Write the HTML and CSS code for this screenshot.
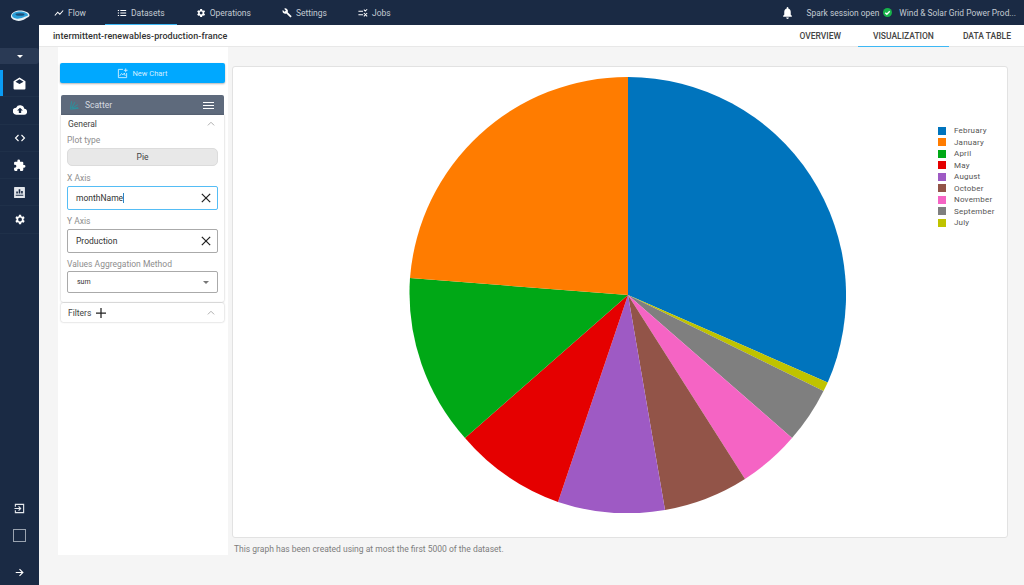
FILE: index.html
```html
<!DOCTYPE html>
<html lang="en">
<head>
    <meta charset="UTF-8">
    <title>Datasets - Visualization</title>
    <link rel="stylesheet" href="styles.css">
</head>
<body>
    <div class="sidebar">
        <div class="logo">
            <svg width="20" height="12" viewBox="0 0 20 12">
                <path fill="#e8f2f7" d="M1 5.500C2 2 6 .5 10 .5s9 1.500 9.500 4.500c.3 2-2.500 2.500-4.500 4-2 1.500-6 2.500-9 1.500C3 9.500.5 8 1 5.500z"/>
                <path fill="#2b9fd8" d="M2 5C3 2.500 6.500 1.500 10 1.500S17.500 3 18 5c.2 1-3 1.500-5 2.500-2 1-5 1.500-7 1C3.500 8 1.500 6.500 2 5z"/>
                <ellipse cx="10" cy="4.500" rx="4.500" ry="1.300" fill="#1d4f78"/>
            </svg>
        </div>
        <div class="side-toggle"><span class="caret"></span></div>
        <a class="side-item active" href="#">
            <svg width="13" height="13" viewBox="0 0 24 24"><path fill="#fff" d="M12 1 1 8v13a2 2 0 0 0 2 2h18a2 2 0 0 0 2-2V8zm0 3 7.500 4.700L12 13 4.500 8.700z"/></svg>
        </a>
        <a class="side-item" href="#">
            <svg width="14" height="14" viewBox="0 0 24 24"><path fill="#fff" d="M19.400 10A7.500 7.500 0 0 0 5.300 8 6 6 0 0 0 6 20h13a5 5 0 0 0 .4-10zM14 13v4h-4v-4H7l5-5 5 5z"/></svg>
        </a>
        <a class="side-item" href="#">
            <svg width="12" height="12" viewBox="0 0 24 24"><path fill="none" stroke="#fff" stroke-width="2.200" d="M9 6l-6 6 6 6M15 6l6 6-6 6"/></svg>
        </a>
        <a class="side-item" href="#">
            <svg width="13" height="13" viewBox="0 0 24 24"><path fill="#fff" d="M20.500 11H19V7a2 2 0 0 0-2-2h-4V3.500a2.500 2.500 0 0 0-5 0V5H4a2 2 0 0 0-2 2v3.800h1.500a2.700 2.700 0 0 1 0 5.400H2V20a2 2 0 0 0 2 2h3.800v-1.500a2.700 2.700 0 0 1 5.400 0V22H17a2 2 0 0 0 2-2v-4h1.500a2.500 2.500 0 0 0 0-5z"/></svg>
        </a>
        <a class="side-item" href="#">
            <svg width="13" height="13" viewBox="0 0 24 24"><path fill="#e4e7ec" fill-rule="evenodd" d="M3 2h18a1 1 0 0 1 1 1v18a1 1 0 0 1-1 1H3a1 1 0 0 1-1-1V3a1 1 0 0 1 1-1zm2 16h14v-2H5zm1-4h3v-4H6zm4.500 0h3V6h-3zm4.500 0h3V9h-3z"/></svg>
        </a>
        <a class="side-item" href="#">
            <svg width="13" height="13" viewBox="0 0 24 24"><path fill="#fff" d="M19.400 13a7.600 7.600 0 0 0 0-2l2.100-1.600-2-3.500-2.500 1a7.600 7.600 0 0 0-1.700-1L15 3.300h-4l-.4 2.600a7.600 7.600 0 0 0-1.700 1l-2.500-1-2 3.500L6.500 11a7.600 7.600 0 0 0 0 2l-2.100 1.600 2 3.500 2.500-1a7.600 7.600 0 0 0 1.700 1l.4 2.600h4l.4-2.600a7.600 7.600 0 0 0 1.700-1l2.500 1 2-3.500zM13 15.500a3.500 3.500 0 1 1 0-7 3.500 3.500 0 0 1 0 7z"/></svg>
        </a>
        <div class="side-bottom">
            <a class="side-icon" href="#">
                <svg width="11" height="11" viewBox="0 0 24 24"><path fill="none" stroke="#e4e7ec" stroke-width="2.500" d="M3 8V3h18v18H3v-5M1 12h13M10 7.500l4.500 4.500-4.500 4.500"/></svg>
            </a>
            <div class="side-square"></div>
            <a class="side-arrow" href="#">
                <svg width="9" height="9" viewBox="0 0 24 24"><path fill="none" stroke="#fff" stroke-width="3" d="M2 12h19M12 3l9 9-9 9"/></svg>
            </a>
        </div>
    </div>

    <div class="main">
        <div class="topbar">
            <div class="nav-links">
                <a href="#">
                    <svg width="10" height="10" viewBox="0 0 24 24"><path fill="none" stroke="#fff" stroke-width="2.500" d="M2 18l7-8 5 5 8-9"/></svg>
                    Flow
                </a>
                <a class="current" href="#">
                    <svg width="10" height="10" viewBox="0 0 24 24"><path fill="none" stroke="#fff" stroke-width="2.500" d="M2 6h3M8 6h14M2 12h3M8 12h14M2 18h3M8 18h14"/></svg>
                    Datasets
                </a>
                <a href="#">
                    <svg width="10" height="10" viewBox="0 0 24 24"><path fill="#fff" d="M19.400 13a7.600 7.600 0 0 0 0-2l2.400-1.800-2.300-4-2.800 1.100a7.600 7.600 0 0 0-1.700-1L14.600 2.500h-4.600l-.4 2.800a7.600 7.600 0 0 0-1.700 1L5.100 5.200l-2.300 4L5.200 11a7.600 7.600 0 0 0 0 2l-2.400 1.800 2.300 4 2.800-1.100a7.600 7.600 0 0 0 1.700 1l.4 2.800h4.600l.4-2.800a7.600 7.600 0 0 0 1.700-1l2.800 1.100 2.300-4zM12.300 15.500a3.500 3.500 0 1 1 0-7 3.500 3.500 0 0 1 0 7z"/></svg>
                    Operations
                </a>
                <a href="#">
                    <svg width="10" height="10" viewBox="0 0 24 24"><path fill="#fff" d="M22.700 19 13.600 9.900A6.400 6.400 0 0 0 5.100 1.500L9.400 5.800 6.400 8.800 2 4.600a6.400 6.400 0 0 0 8.500 8.500l9.100 9.100a1 1 0 0 0 1.400 0l1.700-1.700a1 1 0 0 0 0-1.500z"/></svg>
                    Settings
                </a>
                <a href="#">
                    <svg width="10" height="10" viewBox="0 0 24 24"><path fill="none" stroke="#fff" stroke-width="2.500" d="M1 8h11M1 16h11M14 4l3.500 3.500L22 3M14 20l8-8M14 12l8 8"/></svg>
                    Jobs
                </a>
            </div>
            <div class="session">
                <svg class="bell" width="13" height="14" viewBox="0 0 24 24"><path fill="#fff" d="M12 23a2.500 2.500 0 0 0 2.500-2.500h-5A2.500 2.500 0 0 0 12 23zm8-6-2-2v-5c0-3.200-1.700-5.800-4.500-6.500V2.500a1.500 1.500 0 0 0-3 0v1C7.700 4.200 6 6.800 6 10v5l-2 2v2h16z"/></svg>
                <span>Spark session open</span>
                <svg class="ok" width="9" height="9" viewBox="0 0 24 24"><circle cx="12" cy="12" r="12" fill="#17b34a"/><path fill="none" stroke="#fff" stroke-width="3.500" d="M6 12.500l4.200 4.200L18 8.500"/></svg>
                <span class="dataset-name">Wind &amp; Solar Grid Power Prod...</span>
            </div>
        </div>

        <div class="subbar">
            <div class="dataset-title">intermittent-renewables-production-france</div>
            <div class="tabs">
                <a href="#">OVERVIEW</a>
                <a class="current" href="#">VISUALIZATION</a>
                <a href="#">DATA TABLE</a>
            </div>
        </div>

        <div class="content">
            <div class="left-panel">
                <button class="new-chart">
                    <svg width="11" height="11" viewBox="0 0 24 24"><path fill="none" stroke="#cfeeff" stroke-width="2" d="M13 3H3v18h18V11M6 17l4-5 3 3 3-4 2 6M19 1v8M15 5h8"/></svg>
                    New Chart
                </button>
                <div class="chart-card">
                    <div class="card-head">
                        <span class="card-name">
                            <svg width="11" height="10" viewBox="0 0 24 24"><path fill="none" stroke="#2f8f9c" stroke-width="2.500" d="M2 22 5 3M2 22l20-2M5 20 13 5M6 20l14-9M7 21l13-3"/></svg>
                            Scatter
                        </span>
                        <span class="burger"><i></i><i></i><i></i></span>
                    </div>
                    <div class="section general">
                        <div class="section-head">
                            <span>General</span>
                            <svg width="8" height="5" viewBox="0 0 12 8"><path fill="none" stroke="#aaa" stroke-width="1.500" d="M1 7l5-5 5 5"/></svg>
                        </div>
                        <div class="field-label">Plot type</div>
                        <div class="plot-type">Pie</div>
                        <div class="field-label">X Axis</div>
                        <div class="field focused">
                            <span>monthName<span class="cursor"></span></span>
                            <svg width="10" height="10" viewBox="0 0 12 12"><path stroke="#222" stroke-width="1.500" d="M1 1l10 10M11 1 1 11"/></svg>
                        </div>
                        <div class="field-label">Y Axis</div>
                        <div class="field">
                            <span>Production</span>
                            <svg width="10" height="10" viewBox="0 0 12 12"><path stroke="#222" stroke-width="1.500" d="M1 1l10 10M11 1 1 11"/></svg>
                        </div>
                        <div class="field-label">Values Aggregation Method</div>
                        <div class="field select">
                            <span>sum</span>
                            <span class="caret gray"></span>
                        </div>
                    </div>
                    <div class="section filters">
                        <span class="filters-name">Filters
                            <svg width="10" height="10" viewBox="0 0 12 12"><path stroke="#222" stroke-width="1.500" d="M6 0v12M0 6h12"/></svg>
                        </span>
                        <svg width="8" height="5" viewBox="0 0 12 8"><path fill="none" stroke="#aaa" stroke-width="1.500" d="M1 7l5-5 5 5"/></svg>
                    </div>
                </div>
            </div>

            <div class="chart-column">
                <div class="chart-box">
                    <svg class="pie" width="440" height="440" viewBox="406 73 440 440">
                        <path fill="#0074bd" d="M628 295V77A218 218 0 0 1 827.700 382.500Z"/>
                        <path fill="#bfc300" d="M628 295 827.700 382.500A218 218 0 0 1 823.500 391Z"/>
                        <path fill="#7f7f7f" d="M628 295 823.500 391A218 218 0 0 1 792 438Z"/>
                        <path fill="#f564c4" d="M628 295 792 438A218 218 0 0 1 745 479Z"/>
                        <path fill="#925448" d="M628 295 745 479A218 218 0 0 1 665 510Z"/>
                        <path fill="#9e5ac4" d="M628 295 665 510A218 218 0 0 1 558 502Z"/>
                        <path fill="#e50000" d="M628 295 558 502A218 218 0 0 1 465 438Z"/>
                        <path fill="#00a816" d="M628 295 465 438A218 218 0 0 1 410 278Z"/>
                        <path fill="#ff7c00" d="M628 295 410 278A218 218 0 0 1 628 77Z"/>
                    </svg>
                    <ul class="legend">
                        <li><i class="c1"></i>February</li>
                        <li><i class="c2"></i>January</li>
                        <li><i class="c3"></i>April</li>
                        <li><i class="c4"></i>May</li>
                        <li><i class="c5"></i>August</li>
                        <li><i class="c6"></i>October</li>
                        <li><i class="c7"></i>November</li>
                        <li><i class="c8"></i>September</li>
                        <li><i class="c9"></i>July</li>
                    </ul>
                </div>
                <div class="caption">This graph has been created using at most the first 5000 of the dataset.</div>
            </div>
        </div>
    </div>
</body>
</html>
```

FILE: styles.css
```css
html, body {
    height: 100%;
}
body {
    font-family: Roboto, "Liberation Sans", sans-serif;
    background: #f5f5f5;
    color: #333;
    margin: 0;
    display: flex;
    height: 585px;
    overflow: hidden;
}
a {
    text-decoration: none;
    color: inherit;
}

/* left dark rail */
.sidebar {
    width: 39px;
    flex: none;
    background: #1a2a44;
    display: flex;
    flex-direction: column;
}
.logo {
    height: 25px;
    margin-top: 3px;
    display: flex;
    justify-content: center;
    align-items: center;
}
.side-toggle {
    height: 16px;
    margin-top: 20px;
    background: #2a3a55;
    border-radius: 0 3px 3px 0;
    display: flex;
    justify-content: center;
    align-items: center;
}
.caret {
    width: 0;
    height: 0;
    border-left: 3px solid transparent;
    border-right: 3px solid transparent;
    border-top: 3px solid #fff;
}
.caret.gray {
    border-top-color: #777;
}
.side-item {
    height: 27.300px;
    display: flex;
    justify-content: center;
    align-items: center;
    border-bottom: 1px solid #1f3049;
    box-sizing: border-box;
}
.side-item.active {
    margin-top: 6px;
    box-shadow: inset 3px 0 0 #0a9cf5;
}
.side-bottom {
    margin-top: auto;
    display: flex;
    flex-direction: column;
    align-items: center;
    padding-bottom: 8px;
}
.side-icon {
    display: flex;
    margin-bottom: 15px;
}
.side-square {
    width: 11px;
    height: 11px;
    border: 1px solid #9aa3b0;
    margin-bottom: 26px;
}
.side-arrow {
    display: flex;
}

.main {
    flex: 1;
    min-width: 0;
    display: flex;
    flex-direction: column;
}

/* top navigation */
.topbar {
    height: 25px;
    flex: none;
    background: #1a2a44;
    display: flex;
    justify-content: space-between;
    align-items: stretch;
    color: #c4cad3;
    font-size: 8.500px;
}
.nav-links {
    display: flex;
    gap: 7px;
    padding-left: 3px;
}
.nav-links a {
    display: flex;
    align-items: center;
    gap: 4px;
    padding: 0 12px;
}
.nav-links a.current {
    box-shadow: inset 0 -1px 0 #3db8f5;
}
.session {
    display: flex;
    align-items: center;
    padding-right: 8px;
    font-size: 8.400px;
}
.bell {
    margin-right: 12px;
}
.ok {
    margin: 0 7px 0 4px;
}

.subbar {
    height: 21px;
    flex: none;
    background: #fff;
    border-bottom: 1px solid #e8e8e8;
    display: flex;
    justify-content: space-between;
    align-items: stretch;
    padding-left: 14px;
}
.dataset-title {
    align-self: center;
    font-size: 9px;
    font-weight: 500;
    letter-spacing: 0.070px;
    color: #333;
}
.tabs {
    display: flex;
    padding-right: 4px;
    margin-bottom: -1px;
}
.tabs a {
    display: flex;
    align-items: center;
    font-size: 8.500px;
    font-weight: 500;
    color: #444;
    padding: 0 9px;
}
.tabs a:first-child {
    margin-right: 8px;
}
.tabs a.current {
    padding: 0 15px;
    margin-right: 5px;
    border-bottom: 1px solid #3db8f5;
}

.content {
    flex: 1;
    display: flex;
    padding-left: 19px;
    gap: 4px;
}

/* chart settings column */
.left-panel {
    width: 170px;
    height: 508px;
    flex: none;
    background: #fff;
}
.new-chart {
    display: flex;
    justify-content: center;
    align-items: center;
    gap: 4px;
    width: 165px;
    height: 20px;
    margin: 16px 0 0 2px;
    border: none;
    border-radius: 2px;
    background: #00a8ff;
    color: #cfeeff;
    font-family: inherit;
    font-size: 7.500px;
    box-shadow: 0 1px 2px rgba(0, 0, 0, 0.3);
}
.chart-card {
    width: 163px;
    margin: 12px 0 0 3px;
}
.card-head {
    height: 20px;
    background: #5e6a7c;
    color: #d6dae0;
    font-size: 8.500px;
    border-radius: 2px 2px 0 0;
    display: flex;
    justify-content: space-between;
    align-items: center;
    padding: 0 10px 0 8px;
}
.card-name {
    display: flex;
    align-items: center;
    gap: 5px;
}
.burger {
    display: flex;
    flex-direction: column;
    gap: 2px;
}
.burger i {
    display: block;
    width: 11px;
    height: 1px;
    background: #fff;
}
.section {
    background: #fff;
    box-shadow: 0 0 2px rgba(0, 0, 0, 0.3);
    border-radius: 0 0 2px 2px;
}
.general {
    padding: 0 6px 9px 6px;
}
.section-head {
    display: flex;
    justify-content: space-between;
    align-items: center;
    height: 17px;
    font-size: 8.500px;
    color: #444;
    padding: 0 3px 0 1px;
}
.field-label {
    font-size: 8.500px;
    color: #8e8e8e;
    margin: 3px 0 3px 0;
}
.section-head + .field-label {
    margin-top: 2px;
    padding-top: 1px;
}
.plot-type {
    height: 16px;
    line-height: 16px;
    text-align: center;
    background: #e8e8e8;
    border: 1px solid #dcdcdc;
    border-radius: 5px;
    font-size: 8.500px;
    color: #444;
    margin-bottom: 7px;
}
.field {
    height: 22px;
    border: 1px solid #aaa;
    border-radius: 2px;
    display: flex;
    justify-content: space-between;
    align-items: center;
    padding: 0 6px 0 8px;
    font-size: 8.500px;
    color: #333;
    margin-bottom: 6px;
}
.field.focused {
    border-color: #55bdf5;
}
.field.select {
    height: 20px;
    font-size: 7px;
    margin: -1px 0 0 0;
    padding: 0 8px 0 9px;
}
.cursor {
    display: inline-block;
    width: 1px;
    height: 10px;
    background: #2b86c5;
    vertical-align: -2px;
}
.filters {
    height: 19px;
    margin-top: 1px;
    padding: 0 9px 0 7px;
    display: flex;
    justify-content: space-between;
    align-items: center;
    font-size: 8.500px;
    color: #444;
    border-radius: 2px;
}
.filters-name {
    display: flex;
    align-items: center;
    gap: 5px;
}

/* chart */
.chart-column {
    width: 776px;
}
.chart-box {
    position: relative;
    box-sizing: border-box;
    height: 472px;
    margin-top: 19px;
    background: #fff;
    border: 1px solid #e2e2e2;
    border-radius: 3px;
}
.pie {
    position: absolute;
    left: 173px;
    top: 6px;
}
.legend {
    position: absolute;
    left: 705px;
    top: 58px;
    margin: 0;
    padding: 0;
    list-style: none;
    font-size: 8px;
    color: #555;
    letter-spacing: 0.200px;
}
.legend li {
    display: flex;
    align-items: center;
    gap: 8px;
    height: 11.500px;
}
.legend i {
    width: 8px;
    height: 8px;
}
.c1 { background: #0074bd; }
.c2 { background: #ff7c00; }
.c3 { background: #00a816; }
.c4 { background: #e50000; }
.c5 { background: #9e5ac4; }
.c6 { background: #925448; }
.c7 { background: #f564c4; }
.c8 { background: #7f7f7f; }
.c9 { background: #bfc300; }
.caption {
    margin-top: 6px;
    font-size: 8.500px;
    color: #7d7d7d;
    padding-left: 2px;
}
```
